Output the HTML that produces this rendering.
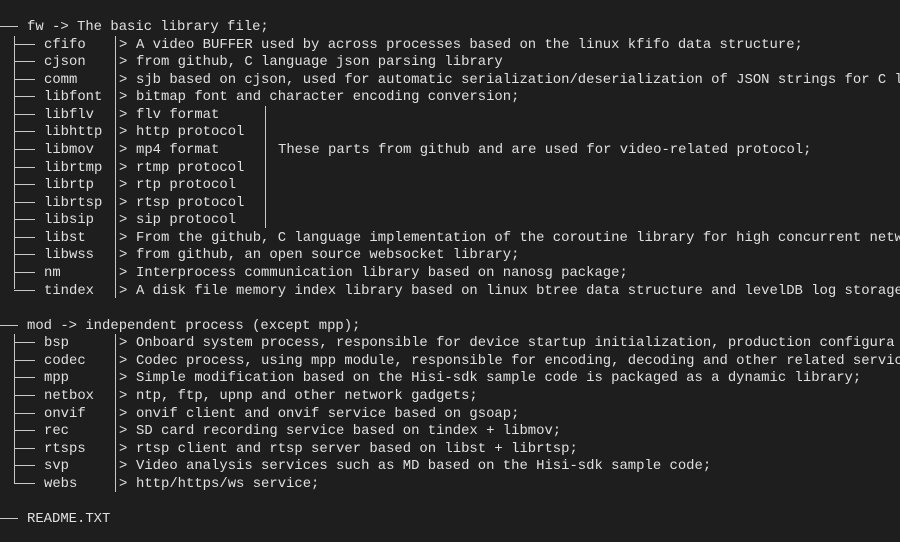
<!DOCTYPE html>
<html><head><meta charset="utf-8"><style>
html,body{margin:0;padding:0;background:#1e1e1e;width:900px;height:542px;overflow:hidden}
body{position:relative;font-family:"Liberation Mono",monospace;font-size:13.9px;color:#e0e0e0}
.r{position:absolute;left:0;width:900px;height:18px;line-height:18px;white-space:pre;overflow:hidden}
.r span{position:absolute;top:0}
.n{left:44px}.d{left:136px}.t{left:27px}
.h{position:absolute;height:1px;background:#c8c8c8;top:8px}
.g{position:absolute;left:119px;top:0}
.v{position:absolute;width:1px;background:#c8c8c8}
</style></head><body>
<div class="v" style="left:14px;top:36px;height:253px"></div>
<div class="v" style="left:115px;top:36px;height:262px"></div>
<div class="v" style="left:265px;top:106px;height:122px"></div>
<div class="v" style="left:14px;top:334px;height:149px"></div>
<div class="v" style="left:115px;top:334px;height:158px"></div>

<div class="r" style="top:18px"><div class="h" style="left:0;width:18px"></div><span class="t">fw -&gt; The basic library file;</span></div>

<div class="r" style="top:35.6px"><div class="h" style="left:14px;width:21px"></div><span class="n">cfifo</span><span class="g">&gt;</span><span class="d">A video BUFFER used by across processes based on the linux kfifo data structure;</span></div>
<div class="r" style="top:53.1px"><div class="h" style="left:14px;width:21px"></div><span class="n">cjson</span><span class="g">&gt;</span><span class="d">from github, C language json parsing library</span></div>
<div class="r" style="top:70.7px"><div class="h" style="left:14px;width:21px"></div><span class="n">comm</span><span class="g">&gt;</span><span class="d">sjb based on cjson, used for automatic serialization/deserialization of JSON strings for C l</span></div>
<div class="r" style="top:88.3px"><div class="h" style="left:14px;width:21px"></div><span class="n">libfont</span><span class="g">&gt;</span><span class="d">bitmap font and character encoding conversion;</span></div>
<div class="r" style="top:105.9px"><div class="h" style="left:14px;width:21px"></div><span class="n">libflv</span><span class="g">&gt;</span><span class="d">flv format</span></div>
<div class="r" style="top:123.4px"><div class="h" style="left:14px;width:21px"></div><span class="n">libhttp</span><span class="g">&gt;</span><span class="d">http protocol</span></div>
<div class="r" style="top:141px"><div class="h" style="left:14px;width:21px"></div><span class="n">libmov</span><span class="g">&gt;</span><span class="d">mp4 format</span><span style="left:278px">These parts from github and are used for video-related protocol;</span></div>
<div class="r" style="top:158.6px"><div class="h" style="left:14px;width:21px"></div><span class="n">librtmp</span><span class="g">&gt;</span><span class="d">rtmp protocol</span></div>
<div class="r" style="top:176.1px"><div class="h" style="left:14px;width:21px"></div><span class="n">librtp</span><span class="g">&gt;</span><span class="d">rtp protocol</span></div>
<div class="r" style="top:193.7px"><div class="h" style="left:14px;width:21px"></div><span class="n">librtsp</span><span class="g">&gt;</span><span class="d">rtsp protocol</span></div>
<div class="r" style="top:211.3px"><div class="h" style="left:14px;width:21px"></div><span class="n">libsip</span><span class="g">&gt;</span><span class="d">sip protocol</span></div>
<div class="r" style="top:228.8px"><div class="h" style="left:14px;width:21px"></div><span class="n">libst</span><span class="g">&gt;</span><span class="d">From the github, C language implementation of the coroutine library for high concurrent netw</span></div>
<div class="r" style="top:246.4px"><div class="h" style="left:14px;width:21px"></div><span class="n">libwss</span><span class="g">&gt;</span><span class="d">from github, an open source websocket library;</span></div>
<div class="r" style="top:264px"><div class="h" style="left:14px;width:21px"></div><span class="n">nm</span><span class="g">&gt;</span><span class="d">Interprocess communication library based on nanosg package;</span></div>
<div class="r" style="top:281.6px"><div class="h" style="left:14px;width:21px"></div><span class="n">tindex</span><span class="g">&gt;</span><span class="d">A disk file memory index library based on linux btree data structure and levelDB log storage</span></div>

<div class="r" style="top:316.7px"><div class="h" style="left:0;width:18px"></div><span class="t">mod -&gt; independent process (except mpp);</span></div>

<div class="r" style="top:334.3px"><div class="h" style="left:14px;width:21px"></div><span class="n">bsp</span><span class="g">&gt;</span><span class="d">Onboard system process, responsible for device startup initialization, production configura</span></div>
<div class="r" style="top:351.9px"><div class="h" style="left:14px;width:21px"></div><span class="n">codec</span><span class="g">&gt;</span><span class="d">Codec process, using mpp module, responsible for encoding, decoding and other related servic</span></div>
<div class="r" style="top:369.4px"><div class="h" style="left:14px;width:21px"></div><span class="n">mpp</span><span class="g">&gt;</span><span class="d">Simple modification based on the Hisi-sdk sample code is packaged as a dynamic library;</span></div>
<div class="r" style="top:387px"><div class="h" style="left:14px;width:21px"></div><span class="n">netbox</span><span class="g">&gt;</span><span class="d">ntp, ftp, upnp and other network gadgets;</span></div>
<div class="r" style="top:404.5px"><div class="h" style="left:14px;width:21px"></div><span class="n">onvif</span><span class="g">&gt;</span><span class="d">onvif client and onvif service based on gsoap;</span></div>
<div class="r" style="top:422.1px"><div class="h" style="left:14px;width:21px"></div><span class="n">rec</span><span class="g">&gt;</span><span class="d">SD card recording service based on tindex + libmov;</span></div>
<div class="r" style="top:439.7px"><div class="h" style="left:14px;width:21px"></div><span class="n">rtsps</span><span class="g">&gt;</span><span class="d">rtsp client and rtsp server based on libst + librtsp;</span></div>
<div class="r" style="top:457.3px"><div class="h" style="left:14px;width:21px"></div><span class="n">svp</span><span class="g">&gt;</span><span class="d">Video analysis services such as MD based on the Hisi-sdk sample code;</span></div>
<div class="r" style="top:474.8px"><div class="h" style="left:14px;width:21px"></div><span class="n">webs</span><span class="g">&gt;</span><span class="d">http/https/ws service;</span></div>

<div class="r" style="top:510px"><div class="h" style="left:0;width:18px"></div><span class="t">README.TXT</span></div>
</body></html>
